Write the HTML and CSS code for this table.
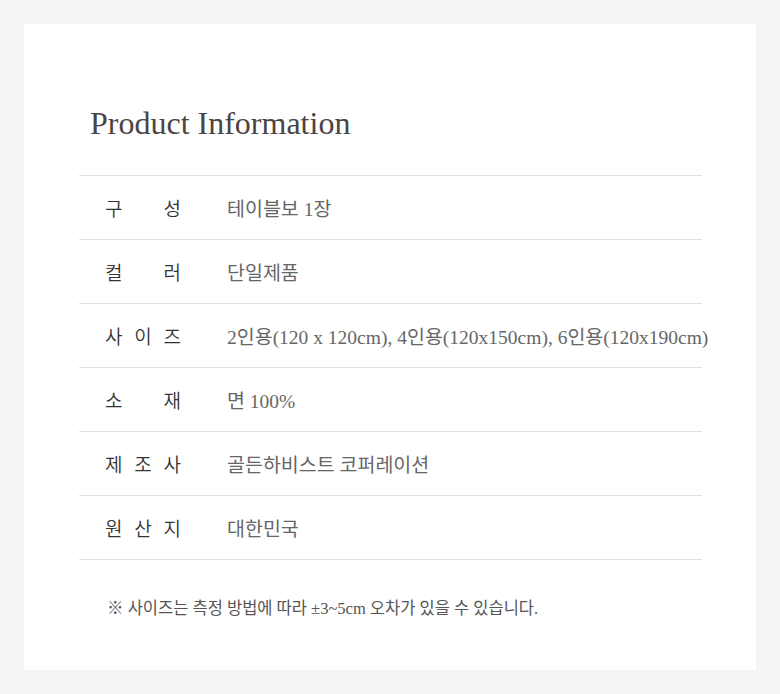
FILE: index.html
```html
<!DOCTYPE html>
<html lang="ko">
<head>
<meta charset="utf-8">
<link rel="stylesheet" href="styles.css">
</head>
<body>
<div class="card">
  <h1 class="title">Product Information</h1>
  <div class="table">
    <div class="row"><div class="label"><span>구</span><span>성</span></div><div class="value">테이블보 1장</div></div>
    <div class="row"><div class="label"><span>컬</span><span>러</span></div><div class="value">단일제품</div></div>
    <div class="row"><div class="label"><span>사</span><span>이</span><span>즈</span></div><div class="value">2인용(120 x 120cm), 4인용(120x150cm), 6인용(120x190cm)</div></div>
    <div class="row"><div class="label"><span>소</span><span>재</span></div><div class="value">면 100%</div></div>
    <div class="row"><div class="label"><span>제</span><span>조</span><span>사</span></div><div class="value">골든하비스트 코퍼레이션</div></div>
    <div class="row"><div class="label"><span>원</span><span>산</span><span>지</span></div><div class="value">대한민국</div></div>
  </div>
  <p class="note">※ 사이즈는 측정 방법에 따라 ±3~5cm 오차가 있을 수 있습니다.</p>
</div>
</body>
</html>
```
FILE: styles.css
```css
html, body {
  margin: 0;
  padding: 0;
  background: #f4f4f4;
}
body {
  padding: 24px;
  font-family: "Liberation Serif", "Noto Sans CJK KR", serif;
}
.card {
  background: #fff;
  width: 732px;
  height: 646px;
  box-sizing: border-box;
  padding: 0 54px 0 55px;
  overflow: hidden;
}
.title {
  margin: 0;
  padding: 82px 0 0 11px;
  font-family: "Liberation Serif", serif;
  font-weight: normal;
  font-size: 32px;
  line-height: 34px;
  color: #4a4542;
  height: 69px;
}
.table {
  border-top: 1px solid #e2e2e2;
}
.row {
  display: flex;
  align-items: center;
  height: 63px;
  border-bottom: 1px solid #e2e2e2;
}
.label {
  display: flex;
  justify-content: space-between;
  flex-shrink: 0;
  width: 76px;
  margin-left: 26px;
  font-size: 19px;
  color: #333;
  font-family: "Noto Sans CJK KR", sans-serif;
  font-weight: 350;
}
.value {
  margin-left: 46px;
  font-size: 19.5px;
  color: #666;
  white-space: nowrap;
}
.note {
  margin: 35px 0 0 28px;
  font-size: 16.5px;
  color: #555;
}
```
